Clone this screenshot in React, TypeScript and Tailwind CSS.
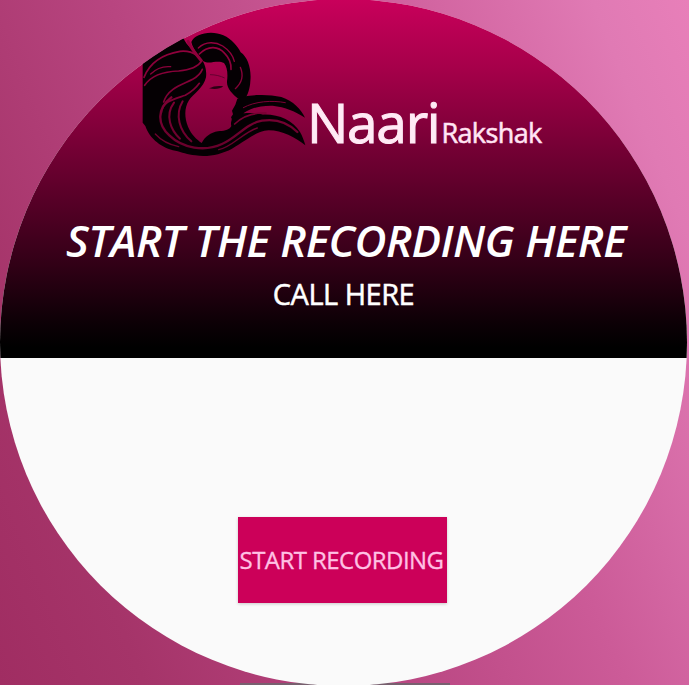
function HairLogo() {
  return (
    <svg className="h-[134px] w-[167px] shrink-0 blur-[0.4px]" viewBox="30 24 501 402" fill="none" aria-hidden="true">
      <defs>
        <linearGradient id="strand" gradientUnits="userSpaceOnUse" x1="0" y1="40" x2="0" y2="410">
          <stop offset="0" stopColor="#98003f" />
          <stop offset="1" stopColor="#65002a" />
        </linearGradient>
      </defs>
      <g fill="#050003">
        {/* left hair, sweeping under the chin */}
        <path d="M38 128C62 100 110 60 160 54C170 78 192 92 207 110C223 124 231 146 228 172C222 202 190 222 176 242C164 262 162 290 174 320C184 344 200 358 215 369C225 350 242 338 264 334C280 333 294 331 303 322C322 316 346 296 372 287C430 276 484 294 510 336C517 348 522 362 526 376C494 352 458 331 416 331C378 333 346 364 306 386C272 404 232 412 196 406C172 404 156 396 136 392C98 386 58 356 46 318L38 308Z" />
        {/* right crown */}
        <path d="M184 66C194 40 246 30 280 46C306 58 322 78 332 97C354 112 365 148 361 184C360 206 353 226 344 238L328 238C306 222 290 204 291 184C294 162 292 142 282 129C262 119 238 134 220 124C204 106 190 90 184 66Z" />
        {/* hair behind the profile and the upper lock */}
        <path d="M322 236C360 222 414 222 454 231C490 243 513 268 525 293C496 274 466 261 428 257C394 256 362 264 340 280C354 278 382 278 398 284C364 292 330 322 296 332L304 318C300 306 309 300 303 292L309 283L306 272L316 254Z" />
      </g>
      <g stroke="url(#strand)" strokeLinecap="round">
        <path strokeWidth="5" d="M42 172C60 126 102 102 150 94C170 92 184 94 200 106" />
        <path strokeWidth="5" d="M44 196C68 160 110 154 146 153C178 150 204 140 214 124" />
        <path strokeWidth="4" d="M62 162C80 144 100 138 122 140" />
        <path strokeWidth="5" d="M101 246C114 204 158 194 188 178C202 170 212 160 217 148" />
        <path strokeWidth="7" d="M124 232C82 264 80 312 118 346C158 385 224 396 276 372C320 354 348 310 396 302C434 296 472 306 502 336" />
        <path strokeWidth="5" d="M94 278C98 244 130 238 166 226C184 216 198 204 208 190" />
        <path strokeWidth="6" d="M132 248C104 286 122 330 150 356" />
        <path strokeWidth="6" d="M158 244C134 284 148 334 184 364" />
        <path strokeWidth="4" d="M76 342C94 362 118 374 146 380" />
        <path strokeWidth="4" d="M266 389C306 382 338 338 382 324" />
        <path strokeWidth="3" d="M340 263C374 244 426 240 466 248" />
        <path strokeWidth="5" d="M314 312C340 286 370 278 408 279" />
        <path strokeWidth="9" d="M174 64C182 82 194 98 214 122" />
        <path strokeWidth="4" d="M205 84C228 62 258 66 278 78C296 90 308 102 313 124" />
        <path strokeWidth="5" d="M208 102C236 74 266 80 284 100C300 116 304 132 303 148" />
        <path strokeWidth="4" d="M331 142C342 168 334 190 316 206" />
      </g>
      {/* closed eye and brow */}
      <path d="M237 205C250 198 266 196 280 199C270 208 252 209 237 205Z" fill="#2c0015" />
      <path d="M240 164C256 164 272 168 284 174" stroke="#650030" strokeWidth="3" />
    </svg>
  );
}

export default function App() {
  return (
    <main className="relative flex h-[685px] w-[689px] items-start overflow-hidden bg-[linear-gradient(68deg,#a02d62_0%,#a53469_15%,#b84580_40%,#cc5b98_65%,#e07ab4_90%,#e87fb9_100%)] font-['Open_Sans','Noto_Sans',sans-serif] text-white">
      <div className="absolute bottom-0 left-[240px] h-0.5 w-[210px] bg-[#78606f]" />
      <section className="relative -mt-px flex h-[687px] w-[687px] shrink-0 flex-col overflow-hidden rounded-full bg-[#fafafa]">
        <header className="flex h-[359px] shrink-0 flex-col items-center bg-[linear-gradient(to_bottom,#c9005b_0%,#a40049_20%,#740034_42%,#380019_71%,#0d0006_90%,#000000_97%)]">
          <div className="mt-[29px] flex h-[134px] w-[407px] items-start">
            <HairLogo />
            <div className="flex items-baseline pt-[27px] whitespace-nowrap text-[#ffeaf5]">
              <span className="text-[55px] leading-[134px] tracking-[-1.3px] [-webkit-text-stroke:1px_#ffeaf5]">Naari</span>
              <span className="ml-0.5 text-[27px] tracking-[-0.6px] [-webkit-text-stroke:0.6px_#ffd9ec]">Rakshak</span>
            </div>
          </div>
          <h1 className="mt-[48px] ml-[5px] whitespace-nowrap text-[44px] leading-[60px] font-semibold italic tracking-[-0.5px]">START THE RECORDING HERE</h1>
          <p className="mt-px text-[29px] leading-[46px] tracking-[-0.5px] [-webkit-text-stroke:0.5px_white]">CALL HERE</p>
        </header>
        <div className="flex flex-col items-center pt-[159px] pr-0.5">
          <button className="flex h-[86px] w-[209px] items-center justify-center whitespace-nowrap bg-[#cc0059] pr-0.5 text-[24px] tracking-[-0.55px] text-[#ffc1e4] shadow-[0_1px_3px_#0003] [-webkit-text-stroke:0.3px_#ffc1e4]">START RECORDING</button>
        </div>
      </section>
    </main>
  );
}
